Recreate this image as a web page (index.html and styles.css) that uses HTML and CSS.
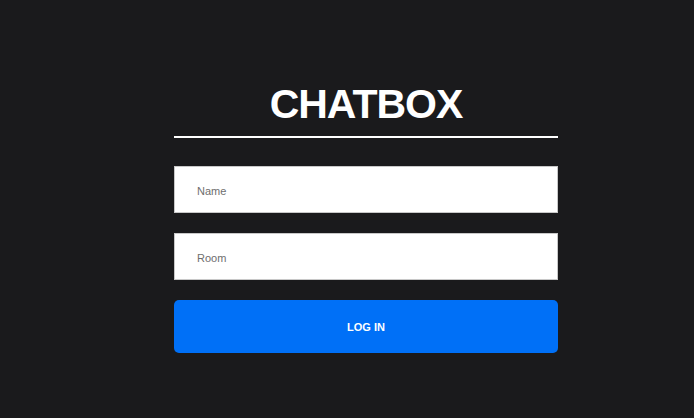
FILE: index.html
```html
<!DOCTYPE html>
<html>
<head>
<meta charset="utf-8">
<link rel="stylesheet" href="styles.css">
</head>
<body>
<main class="page">
  <form class="login">
    <h1 class="title">CHATBOX</h1>
    <input class="field field-first" type="text" placeholder="Name">
    <input class="field" type="text" placeholder="Room">
    <button class="submit" type="button">LOG IN</button>
  </form>
</main>
</body>
</html>
```
FILE: styles.css
```css
html, body {
  margin: 0;
  padding: 0;
  background: #1a1a1c;
  height: 100%;
}
.page {
  padding: 80px 0 0 174px;
}
.login {
  width: 384px;
  display: flex;
  flex-direction: column;
}
.title {
  margin: 0;
  font-family: "Liberation Sans", Arial, sans-serif;
  font-weight: 700;
  font-size: 41px;
  letter-spacing: -1px;
  line-height: 48px;
  color: #fff;
  text-align: center;
  padding-bottom: 8px;
  border-bottom: 2px solid #fff;
}
.field {
  box-sizing: border-box;
  height: 47px;
  margin: 0 0 20px 0;
  padding: 2px 0 0 22px;
  border: 1px solid #c8c8c8;
  background: #fff;
  font-family: "Liberation Sans", Arial, sans-serif;
  font-size: 11px;
  color: #333;
  outline: none;
}
.field-first {
  margin-top: 28px;
}
.field::placeholder {
  color: #6e6e6e;
}
.submit {
  height: 53px;
  border: none;
  border-radius: 5px;
  background: #0070f7;
  color: #fff;
  font-family: "Liberation Sans", Arial, sans-serif;
  font-weight: 700;
  font-size: 11px;
  cursor: pointer;
}
```
